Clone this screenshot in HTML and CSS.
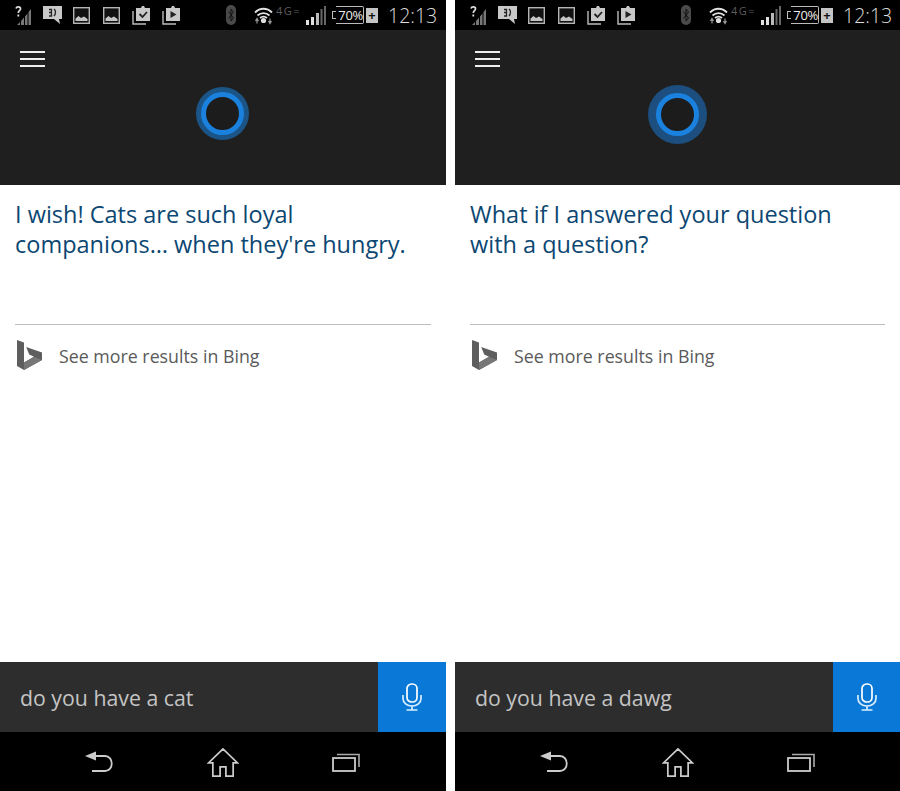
FILE: index.html
```html
<!DOCTYPE html>
<html lang="en">
<head>
  <meta charset="UTF-8">
  <title>Cortana</title>
  <link rel="stylesheet" href="styles.css">
</head>
<body>
  <!-- shared icons -->
  <svg class="defs" width="0" height="0">
    <symbol id="i-signal-q" viewBox="0 0 17 20">
      <path d="M2 3.500c.5-2 4.500-2.200 4.500.2 0 2-2.200 2-2.200 4.300" fill="none" stroke="#ddd" stroke-width="1.700"/>
      <rect x="3.400" y="9.500" width="1.800" height="2" fill="#ddd"/>
      <path d="M3 20l3-3v3zM7 20v-4l3-3.500V20zM11 20V11.500L13.500 8.500V20zM14.500 20V7L17 4V20z" fill="#777"/>
    </symbol>
    <symbol id="i-chat" viewBox="0 0 19 20">
      <path d="M0 1h19v13h-3l1 5-6-5H0z" fill="#c8c8c8"/>
      <path d="M6 4.500H8.500V11H6M6 7.500H8.500M11 4c2 1.500 2 5 0 7" fill="none" stroke="#222" stroke-width="1.300"/>
    </symbol>
    <symbol id="i-pic" viewBox="0 0 17 17">
      <rect x=".7" y=".7" width="15.600" height="15.600" fill="#111" stroke="#b5b5b5" stroke-width="1.400"/>
      <path d="M2.500 14v-2.500l3-2.500 2.500 2 3-1.500 3.500 2.500V14z" fill="#c4c4c4"/>
    </symbol>
    <symbol id="i-task" viewBox="0 0 19 20">
      <path d="M1 6v13h13" fill="none" stroke="#bbb" stroke-width="1.400"/>
      <path d="M4 3h5l1-2h2l1 2h5v13H4z" fill="#c8c8c8"/>
      <path d="M7.500 9l3 3 4.500-5" fill="none" stroke="#222" stroke-width="1.800"/>
    </symbol>
    <symbol id="i-play" viewBox="0 0 19 20">
      <path d="M1 6v13h13" fill="none" stroke="#bbb" stroke-width="1.400"/>
      <path d="M4 3h5l1-2h2l1 2h5v13H4z" fill="#c8c8c8"/>
      <path d="M8.500 6l6 3.500-6 3.500z" fill="#222"/>
    </symbol>
    <symbol id="i-bt" viewBox="0 0 10 20">
      <rect width="10" height="20" rx="5" fill="#4a4a4a"/>
      <path d="M2.500 6.500l5 6.500-2.500 3V4l2.500 3-5 6.500" fill="none" stroke="#111" stroke-width="1"/>
    </symbol>
    <symbol id="i-wifi" viewBox="0 0 19 20">
      <path d="M1 7.500c5-5 12-5 17 0M3.500 10.500c3.500-3.300 8.500-3.300 12 0M6 13c2-1.600 5-1.600 7 0" fill="none" stroke="#e2e2e2" stroke-width="1.800"/>
      <circle cx="9.500" cy="15.500" r="2.600" fill="#ddd"/>
      <path d="M3 13.500v5M1.500 16l1.500-2.500L4.500 16M16 18.500v-5M14.500 16l1.500 2.500 1.500-2.500" fill="none" stroke="#999" stroke-width="1.200"/>
    </symbol>
    <symbol id="i-bars" viewBox="0 0 20 20">
      <path d="M0 15h3v5H0zM5 12h3v8H5z" fill="#e0e0e0"/>
      <path d="M10 8h3v12h-3z" fill="#bbb"/>
      <path d="M14.500 4h2v16h-2zM18 1h2v19h-2z" fill="#666"/>
    </symbol>
    <symbol id="i-bing" viewBox="0 0 25 30">
      <path d="M0 0l7 2.500v20l10-5.800-4.800-2.300-3-7.400L25 12.500v7.500L7 30l-7-4z" fill="#5e5e5e"/>
      <path d="M7 22.500l10-5.800 8 3.300L7 30z" fill="#777"/>
    </symbol>
    <symbol id="i-mic" viewBox="0 0 20 28">
      <rect x="5" y="1" width="10" height="18" rx="4.500" fill="none" stroke="#fff" stroke-width="1.700"/>
      <path d="M1 12v3.500C1 20 5 23 10 23s9-3 9-7.500V12M10 23v3.500M4.500 27h11" fill="none" stroke="#d8efff" stroke-width="1.700"/>
    </symbol>
    <symbol id="i-back" viewBox="0 0 28 24">
      <path d="M0 6l11-4.500v9z" fill="#ccc"/>
      <path d="M9 6h11c9 0 9 15 0 15H7" fill="none" stroke="#ccc" stroke-width="1.800"/>
    </symbol>
    <symbol id="i-home" viewBox="0 0 32 30">
      <path d="M16 1L1 15.500h4.500V29h7.500v-9.500h6V29h7.500V15.500H31z" fill="none" stroke="#ccc" stroke-width="1.800" stroke-linejoin="miter"/>
    </symbol>
    <symbol id="i-recent" viewBox="0 0 28 20">
      <rect x="1" y="6" width="22" height="13" fill="none" stroke="#ccc" stroke-width="1.800"/>
      <path d="M5 2.500H27V15" fill="none" stroke="#aaa" stroke-width="1.600"/>
    </symbol>
  </svg>

  <div class="screens">
    <section class="phone phone-left">
      <div class="status">
        <svg class="st st-q"><use href="#i-signal-q"/></svg>
        <svg class="st st-chat"><use href="#i-chat"/></svg>
        <svg class="st st-pic"><use href="#i-pic"/></svg>
        <svg class="st st-pic2"><use href="#i-pic"/></svg>
        <svg class="st st-task"><use href="#i-task"/></svg>
        <svg class="st st-play"><use href="#i-play"/></svg>
        <svg class="st st-bt"><use href="#i-bt"/></svg>
        <svg class="st st-wifi"><use href="#i-wifi"/></svg>
        <span class="net">4G=</span>
        <svg class="st st-bars"><use href="#i-bars"/></svg>
        <span class="battery">70%</span>
        <span class="plug">+</span>
        <span class="clock">12:13</span>
      </div>
      <header class="top">
        <div class="burger"><i></i><i></i><i></i></div>
        <div class="cortana"><div class="ring"></div></div>
      </header>
      <main class="answer">
        <h1>I wish! Cats are such loyal<br>companions… when they're hungry.</h1>
        <div class="bing-row">
          <svg class="bing"><use href="#i-bing"/></svg>
          <span>See more results in Bing</span>
        </div>
      </main>
      <div class="query">
        <span class="query-text">do you have a cat</span>
        <div class="mic"><svg><use href="#i-mic"/></svg></div>
      </div>
      <nav class="softkeys">
        <svg class="k-back"><use href="#i-back"/></svg>
        <svg class="k-home"><use href="#i-home"/></svg>
        <svg class="k-recent"><use href="#i-recent"/></svg>
      </nav>
    </section>

    <section class="phone phone-right">
      <div class="status">
        <svg class="st st-q"><use href="#i-signal-q"/></svg>
        <svg class="st st-chat"><use href="#i-chat"/></svg>
        <svg class="st st-pic"><use href="#i-pic"/></svg>
        <svg class="st st-pic2"><use href="#i-pic"/></svg>
        <svg class="st st-task"><use href="#i-task"/></svg>
        <svg class="st st-play"><use href="#i-play"/></svg>
        <svg class="st st-bt"><use href="#i-bt"/></svg>
        <svg class="st st-wifi"><use href="#i-wifi"/></svg>
        <span class="net">4G=</span>
        <svg class="st st-bars"><use href="#i-bars"/></svg>
        <span class="battery">70%</span>
        <span class="plug">+</span>
        <span class="clock">12:13</span>
      </div>
      <header class="top">
        <div class="burger"><i></i><i></i><i></i></div>
        <div class="cortana cortana-big"><div class="ring"></div></div>
      </header>
      <main class="answer">
        <h1>What if I answered your question<br>with a question?</h1>
        <div class="bing-row">
          <svg class="bing"><use href="#i-bing"/></svg>
          <span>See more results in Bing</span>
        </div>
      </main>
      <div class="query">
        <span class="query-text">do you have a dawg</span>
        <div class="mic"><svg><use href="#i-mic"/></svg></div>
      </div>
      <nav class="softkeys">
        <svg class="k-back"><use href="#i-back"/></svg>
        <svg class="k-home"><use href="#i-home"/></svg>
        <svg class="k-recent"><use href="#i-recent"/></svg>
      </nav>
    </section>
  </div>
</body>
</html>
```

FILE: styles.css
```css
body {
  margin: 0;
  background: #fff;
  font-family: "Open Sans", "Noto Sans", sans-serif;
}
.defs {
  position: absolute;
}
.screens {
  display: flex;
  justify-content: space-between;
  width: 900px;
  height: 791px;
  overflow: hidden;
}
.phone {
  display: flex;
  flex-direction: column;
  height: 791px;
}
.phone-left {
  width: 446px;
}
.phone-right {
  width: 445px;
}

/* status bar */
.status {
  display: flex;
  align-items: center;
  height: 30px;
  padding-left: 14px;
  background: #000;
  color: #ddd;
  box-sizing: border-box;
}
.st {
  flex: none;
  height: 20px;
}
.st-q { width: 17px; }
.st-chat { width: 19px; margin-left: 12px; }
.st-pic { width: 17px; height: 17px; margin-left: 11px; }
.st-pic2 { width: 17px; height: 17px; margin-left: 13px; }
.st-task { width: 19px; margin-left: 12px; }
.st-play { width: 19px; margin-left: 11px; }
.st-bt { width: 10px; margin-left: 45px; }
.st-wifi { width: 19px; margin-left: 18px; }
.st-bars { width: 20px; margin-left: 6px; }
.net {
  width: 24px;
  margin-left: 3px;
  margin-top: -10px;
  font-size: 11px;
  letter-spacing: 1.500px;
  color: #5c5c5c;
}
.battery {
  position: relative;
  width: 27px;
  height: 16px;
  margin-left: 10px;
  border: 1px solid #bbb;
  border-left: 0;
  border-radius: 0 2px 2px 0;
  font-size: 13px;
  letter-spacing: -.3px;
  line-height: 16px;
  text-align: right;
  color: #eee;
}
.battery::before {
  content: "";
  position: absolute;
  left: -4px;
  top: 4px;
  width: 4px;
  height: 8px;
  border: 1px solid #bbb;
  border-right: 0;
  box-sizing: border-box;
}
.plug {
  width: 12px;
  height: 15px;
  margin-left: 2px;
  background: #c4c4c4;
  color: #111;
  font-size: 13px;
  font-weight: 700;
  line-height: 14px;
  text-align: center;
}
.clock {
  margin-left: 10px;
  font-size: 19.500px;
  font-weight: 300;
  color: #ddd;
}

/* cortana header */
.top {
  position: relative;
  height: 155px;
  background: #1f1f1f;
}
.burger {
  display: flex;
  flex-direction: column;
  gap: 5px;
  width: 25px;
  padding: 21px 0 0 20px;
}
.burger i {
  display: block;
  height: 2px;
  background: #eee;
}
.cortana {
  position: absolute;
  left: 196px;
  top: 57px;
  width: 53px;
  height: 53px;
  border-radius: 50%;
  background: radial-gradient(circle, #1b5588 0, #1b5588 80%, #193c5c 100%);
  display: flex;
  align-items: center;
  justify-content: center;
}
.cortana-big {
  left: 193px;
  top: 55px;
  width: 59px;
  height: 59px;
  background: #1c4f7f;
}
.ring {
  width: 33px;
  height: 33px;
  border: 5px solid #1a82de;
  border-radius: 50%;
  background: #1c1c1c;
}

/* answer */
.answer {
  flex: 1;
  padding: 14px 15px 0;
  background: #fff;
}
.answer h1 {
  height: 125px;
  margin: 0;
  border-bottom: 1px solid #bdbdbd;
  color: #0c4772;
  font-size: 23.500px;
  font-weight: 400;
  line-height: 30px;
}
.bing-row {
  display: flex;
  align-items: center;
  padding: 15px 0 0 2px;
  color: #5a5a5a;
  font-size: 17.800px;
}
.bing-row span {
  margin-top: 2px;
}
.bing {
  width: 25px;
  height: 30px;
  margin-right: 17px;
}

/* query box */
.query {
  display: flex;
  justify-content: space-between;
  align-items: center;
  height: 70px;
  padding-left: 20px;
  background: #2d2d2d;
}
.query-text {
  color: #c4c4c4;
  font-size: 21.300px;
}
.mic {
  display: flex;
  align-items: center;
  justify-content: center;
  width: 68px;
  height: 70px;
  background: #0a78d6;
}
.phone-right .mic {
  width: 67px;
}
.mic svg {
  width: 20px;
  height: 28px;
}

/* android keys */
.softkeys {
  display: flex;
  align-items: center;
  height: 59px;
  padding-left: 85px;
  background: #000;
}
.k-back {
  width: 28px;
  height: 24px;
}
.k-home {
  width: 32px;
  height: 29px;
  margin-left: 94px;
  margin-top: 2px;
}
.k-recent {
  width: 28px;
  height: 20px;
  margin-left: 93px;
}
```
